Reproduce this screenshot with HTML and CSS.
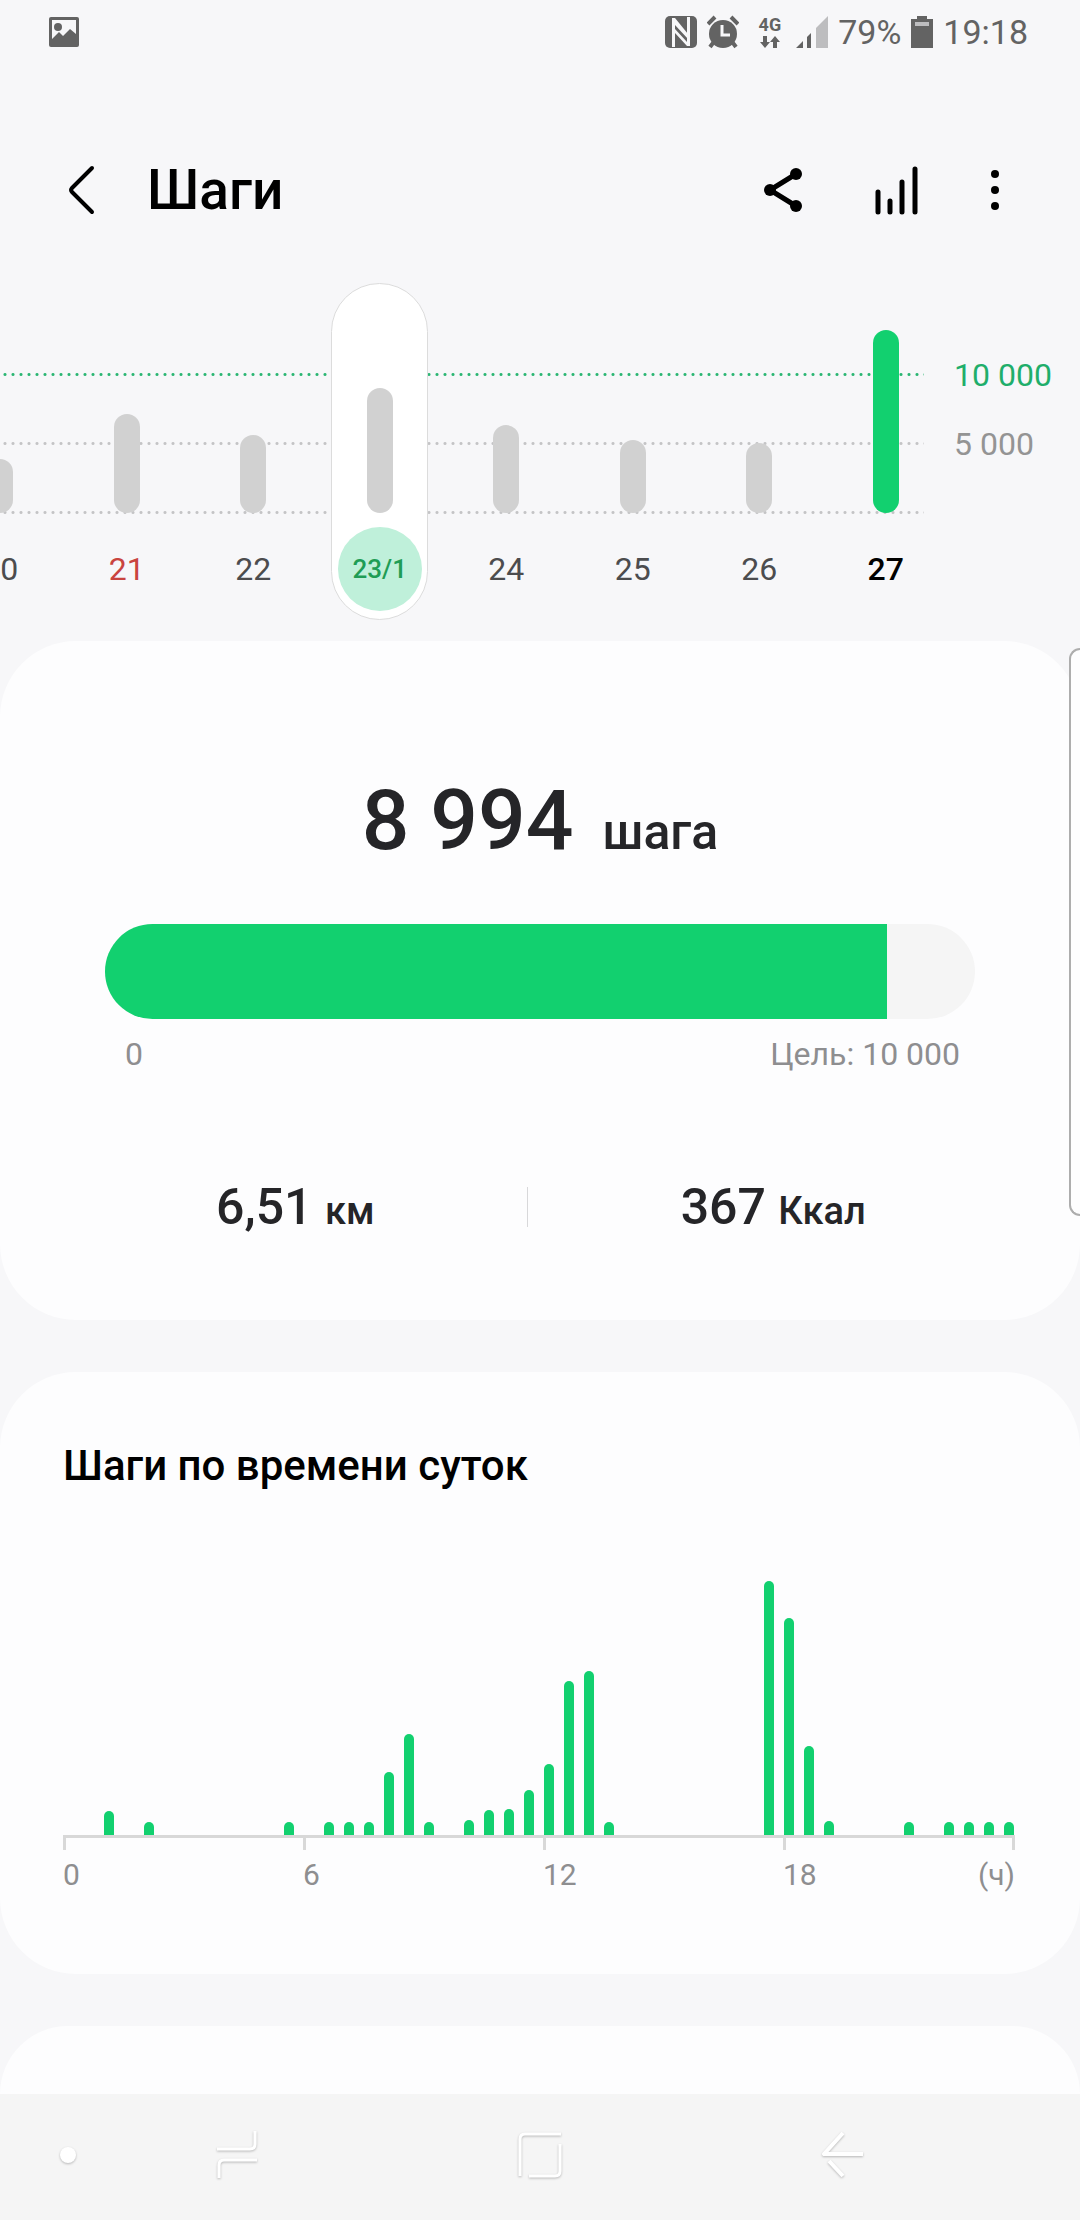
FILE: index.html
```html
<!DOCTYPE html>
<html lang="ru">
<head>
  <meta charset="UTF-8" />
  <meta name="viewport" content="width=device-width, initial-scale=1" />
  <title>Шаги</title>
  <link rel="stylesheet" href="styles.css">
</head>
<body>

  <div class="status-bar">
    <svg class="status-photo" width="32" height="32" viewBox="0 0 32 32">
      <rect x="1" y="1" width="30" height="30" rx="2" fill="#636363"/>
      <path d="M4 4h24v14l-6-5-7 7-4-4-7 7z" fill="#f7f7f9"/>
      <circle cx="10" cy="11" r="4" fill="#636363"/>
    </svg>
    <div class="status-right">
      <svg width="32" height="34" viewBox="0 0 32 34">
        <rect y="1" width="32" height="32" rx="5" fill="#636363"/>
        <path d="M8 4v28M24 2v28" stroke="#f7f7f9" stroke-width="2"/>
        <path d="M7 3h3l13 16v5L10 10v22H7zM22 2h3v29h-3L10 18v-4l12 13z" fill="#f7f7f9"/>
      </svg>
      <svg width="32" height="34" viewBox="0 0 32 34">
        <circle cx="16" cy="19" r="14" fill="#636363"/>
        <path d="M1 9l7-7M31 9l-7-7" stroke="#636363" stroke-width="4"/>
        <path d="M6 28l-3 4M26 28l3 4" stroke="#636363" stroke-width="4"/>
        <path d="M15 10v10h8" fill="none" stroke="#f7f7f9" stroke-width="3"/>
      </svg>
      <div class="network">
        <span>4G</span>
        <svg width="20" height="12" viewBox="0 0 20 12">
          <path d="M3 0h4v6h3l-5 6-5-6h3zM13 12h4V6h3l-5-6-5 6h3z" fill="#636363"/>
        </svg>
      </div>
      <svg width="32" height="32" viewBox="0 0 32 32">
        <path d="M0 32l7-7v7zM11 32V21l4-4v15z" fill="#636363"/>
        <path d="M20 32V12L32 0v32z" fill="#bdbdbf"/>
      </svg>
      <span class="status-text">79%</span>
      <svg width="22" height="32" viewBox="0 0 22 32">
        <path d="M6 0h10v3h6v29H0V3h6z" fill="#636363"/>
        <path d="M4 6h14v4H4z" fill="#bdbdbf"/>
      </svg>
      <span class="status-text">19:18</span>
    </div>
  </div>

  <header>
    <button class="icon-btn" aria-label="Назад">
      <svg width="30" height="52" viewBox="0 0 30 52">
        <path d="M25 4L5 24q-2 2 0 4l20 20" fill="none" stroke="#000" stroke-width="4" stroke-linecap="round"/>
      </svg>
    </button>
    <h1>Шаги</h1>
    <div class="header-actions">
      <button class="icon-btn" aria-label="Поделиться">
        <svg width="38" height="44" viewBox="0 0 38 44">
          <path d="M32 6L6 22l26 16" fill="none" stroke="#000" stroke-width="5"/>
          <circle cx="32" cy="6" r="6"/>
          <circle cx="6" cy="22" r="6"/>
          <circle cx="32" cy="38" r="6"/>
        </svg>
      </button>
      <button class="icon-btn" aria-label="Статистика">
        <svg width="44" height="50" viewBox="0 0 44 50">
          <path d="M4 27v20M16 36v11M28 17v30M41 4v43" stroke="#000" stroke-width="5" stroke-linecap="round"/>
        </svg>
      </button>
      <button class="icon-btn" aria-label="Ещё">
        <svg width="10" height="44" viewBox="0 0 10 44">
          <circle cx="5" cy="6" r="4"/>
          <circle cx="5" cy="22" r="4"/>
          <circle cx="5" cy="38" r="4"/>
        </svg>
      </button>
    </div>
  </header>

  <section class="week">
    <div class="days">
      <div class="guide guide-goal"></div>
      <div class="guide guide-half"></div>
      <div class="guide guide-zero"></div>
      <button class="day"><i class="day-bar" style="height: 54px"></i><span class="day-label">20</span></button>
      <button class="day"><i class="day-bar" style="height: 99px"></i><span class="day-label holiday">21</span></button>
      <button class="day"><i class="day-bar" style="height: 78px"></i><span class="day-label">22</span></button>
      <button class="day selected"><i class="day-bar" style="height: 125px"></i><span class="day-label">23/1</span></button>
      <button class="day"><i class="day-bar" style="height: 88px"></i><span class="day-label">24</span></button>
      <button class="day"><i class="day-bar" style="height: 73px"></i><span class="day-label">25</span></button>
      <button class="day"><i class="day-bar" style="height: 70px"></i><span class="day-label">26</span></button>
      <button class="day today"><i class="day-bar" style="height: 183px"></i><span class="day-label">27</span></button>
    </div>
    <div class="scale">
      <span class="scale-goal">10 000</span>
      <span>5 000</span>
    </div>
  </section>

  <main>
    <section class="card summary">
      <p class="steps">8 994 <span class="steps-unit">шага</span></p>
      <div class="progress">
        <div class="progress-fill" style="width: 89.94%"></div>
      </div>
      <div class="progress-labels">
        <span>0</span>
        <span>Цель: 10 000</span>
      </div>
      <div class="stats">
        <p class="stat">6,51 <span class="stat-unit">км</span></p>
        <div class="divider"></div>
        <p class="stat">367 <span class="stat-unit">Ккал</span></p>
      </div>
    </section>

    <section class="card hours">
      <h2>Шаги по времени суток</h2>
      <div class="chart">
        <div id="bars" class="bars"></div>
        <div class="axis"></div>
        <div class="ticks">
          <span class="tick">0</span>
          <span class="tick">6</span>
          <span class="tick">12</span>
          <span class="tick">18</span>
          <span class="tick tick-end">(ч)</span>
        </div>
      </div>
    </section>

    <section class="card next-card"></section>
  </main>

  <div class="edge-handle"></div>

  <nav>
    <button class="nav-btn nav-dot" aria-label="Скрыть панель">
      <svg width="20" height="20" viewBox="0 0 20 20">
        <circle cx="10" cy="10" r="8" fill="#fff"/>
      </svg>
    </button>
    <button class="nav-btn" aria-label="Недавние">
      <svg width="42" height="50" viewBox="0 0 42 50">
        <path d="M39 1v13q0 5-5 5H1M3 48V35q0-5 5-5h33" fill="none" stroke="#fff" stroke-width="3"/>
      </svg>
    </button>
    <button class="nav-btn" aria-label="Главный экран">
      <svg width="44" height="48" viewBox="0 0 44 48">
        <path d="M2 45V8q0-5 5-5h36M42 13v27q0 5-5 5H11" fill="none" stroke="#fff" stroke-width="3"/>
      </svg>
    </button>
    <button class="nav-btn" aria-label="Назад">
      <svg width="42" height="48" viewBox="0 0 42 48">
        <path d="M21 2L2 23h39M7 30l14 15" fill="none" stroke="#fff" stroke-width="4" stroke-linejoin="round"/>
      </svg>
    </button>
  </nav>

  <script>
    // one value per half hour, 00:00 - 23:30
    const halfHours = [
      0, 0, 24, 0, 13, 0, 0, 0, 0, 0, 0, 13,
      0, 13, 13, 13, 63, 101, 13, 0, 15, 25, 26, 45,
      71, 154, 164, 13, 0, 0, 0, 0, 0, 0, 0, 254,
      217, 89, 14, 0, 0, 0, 13, 0, 13, 13, 13, 13
    ];

    document.getElementById("bars").innerHTML = halfHours
      .map(value => `<i class="bar" style="height: ${value}px"></i>`)
      .join("");
  </script>

</body>
</html>
```
FILE: styles.css
```css
* {
  box-sizing: border-box;
}
body {
  font-family: Roboto, sans-serif;
  background: #f7f7f9;
  margin: 0;
  color: #252528;
  min-height: 100vh;
  display: flex;
  flex-direction: column;
  overflow-x: hidden;
  position: relative;
}
h1, h2, p {
  margin: 0;
  font-weight: 500;
}
button {
  font: inherit;
  color: inherit;
  background: none;
  border: none;
  padding: 0;
  cursor: pointer;
}
svg {
  display: block;
}

/* status bar */
.status-bar {
  display: flex;
  justify-content: space-between;
  align-items: center;
  height: 64px;
  padding: 0 52px 0 48px;
  color: #636363;
}
.status-right {
  display: flex;
  align-items: center;
  gap: 10px;
}
.network {
  display: flex;
  flex-direction: column;
  align-items: center;
  gap: 2px;
  margin: 0 5px 0 10px;
  font-size: 18px;
  line-height: 18px;
  font-weight: 700;
}
.status-text {
  font-size: 34px;
  line-height: 40px;
}

/* header */
header {
  display: flex;
  align-items: center;
  height: 106px;
  margin: 73px 0 40px;
  padding: 0 80px 0 67px;
}
h1 {
  flex: 1;
  margin-left: 50px;
  font-size: 55px;
  line-height: 66px;
  color: #000;
}
.header-actions {
  display: flex;
  align-items: center;
  gap: 72px;
}

/* week strip */
.week {
  display: flex;
}
.days {
  position: relative;
  flex: 1;
  display: grid;
  grid-template-columns: repeat(8, 1fr);
  justify-items: center;
  margin-left: -63px;
}
.guide {
  position: absolute;
  left: 0;
  right: 25px;
  height: 3px;
  background: radial-gradient(circle, #c4c4c6 1px, transparent 2px) 0 0 / 8px 3px repeat-x;
}
.guide-goal {
  top: 90px;
  background-image: radial-gradient(circle, #2bb673 1px, transparent 2px);
}
.guide-half {
  top: 159px;
}
.guide-zero {
  top: 228px;
}
.day {
  position: relative;
  display: flex;
  flex-direction: column;
  align-items: center;
  justify-content: flex-end;
  width: 97px;
  height: 337px;
  padding-bottom: 8px;
  border: 1px solid transparent;
  border-radius: 49px;
}
.day-bar {
  width: 26px;
  margin-bottom: 14px;
  border-radius: 13px;
  background: #d1d1d1;
}
.day-label {
  width: 84px;
  height: 84px;
  border-radius: 50%;
  font-size: 32px;
  line-height: 84px;
  color: #4c4c4e;
}
.holiday {
  color: #c9443f;
}
.selected {
  background: #fff;
  border-color: #dcdcdc;
}
.selected .day-label {
  background: #bff0da;
  color: #1f9d55;
  font-size: 26px;
  font-weight: 500;
}
.today .day-bar {
  background: #12d06f;
}
.today .day-label {
  color: #000;
  font-weight: 500;
}
.scale {
  width: 131px;
  padding: 73px 0 0 5px;
  display: flex;
  flex-direction: column;
  gap: 31px;
  font-size: 32px;
  line-height: 38px;
  color: #949494;
  white-space: nowrap;
}
.scale-goal {
  color: #1fae6b;
}

/* cards */
main {
  flex: 1;
  display: flex;
  flex-direction: column;
  gap: 52px;
  margin-top: 21px;
}
.card {
  background: #fdfdfe;
  border-radius: 76px;
}
.summary {
  padding: 130px 0 83px;
}
.steps {
  text-align: center;
  font-size: 84px;
  line-height: 100px;
}
.steps-unit {
  margin-left: 8px;
  font-size: 50px;
  line-height: 1;
}
.progress {
  height: 95px;
  margin: 53px 105px 16px;
  border-radius: 48px;
  background: #f5f5f5;
  overflow: hidden;
}
.progress-fill {
  height: 100%;
  background: #12d06f;
}
.progress-labels {
  display: flex;
  justify-content: space-between;
  padding: 0 120px 0 125px;
  font-size: 32px;
  line-height: 38px;
  color: #8e8e90;
}
.stats {
  display: grid;
  grid-template-columns: 16fr 1px 17fr;
  align-items: center;
  margin-top: 104px;
  padding: 0 61px 0 64px;
}
.stat {
  text-align: center;
  font-size: 50px;
  line-height: 60px;
}
.stat-unit {
  font-size: 38px;
  line-height: 1;
}
.divider {
  height: 40px;
  background: #d8d8da;
}
.hours {
  padding: 69px 0 81px;
}
h2 {
  padding-left: 63px;
  font-size: 42px;
  line-height: 50px;
  color: #000;
}
.chart {
  margin: 84px 61px 0 59px;
}
.bars {
  display: grid;
  grid-template-columns: repeat(48, 1fr);
  align-items: end;
  justify-items: center;
  height: 260px;
}
.bar {
  width: 10px;
  border-radius: 5px 5px 0 0;
  background: #12d06f;
}
.axis {
  height: 3px;
  margin: 0 4px;
  background: #d8d8d8;
}
.ticks {
  display: flex;
  font-size: 30px;
  line-height: 36px;
  color: #8e8e90;
}
.tick {
  width: 25%;
  padding-left: 4px;
}
.tick::before {
  content: "";
  display: block;
  width: 3px;
  height: 12px;
  margin-bottom: 7px;
  background: #d8d8d8;
}
.tick:nth-child(4) {
  flex: 1;
}
.tick-end {
  width: auto;
  padding: 0 4px 0 0;
}
.tick-end::before {
  margin-left: auto;
}
.next-card {
  flex: 1;
  min-height: 64px;
  border-radius: 76px 76px 0 0;
}

/* edge panel handle */
.edge-handle {
  position: absolute;
  top: 648px;
  right: 0;
  width: 11px;
  height: 568px;
  border: 2px solid #adadad;
  border-right: none;
  border-radius: 14px 0 0 14px;
  background: #fdfdfe;
}

/* navigation bar */
nav {
  display: grid;
  grid-template-columns: 86px 1fr 1fr 1fr 86px;
  height: 126px;
  background: #f5f5f5;
}
.nav-btn {
  display: flex;
  align-items: center;
  justify-content: center;
  padding-bottom: 4px;
}
.nav-dot {
  justify-content: flex-end;
  padding-right: 8px;
}
.nav-btn svg {
  filter: drop-shadow(0 1px 1px rgba(0,0,0,0.25));
}
```
